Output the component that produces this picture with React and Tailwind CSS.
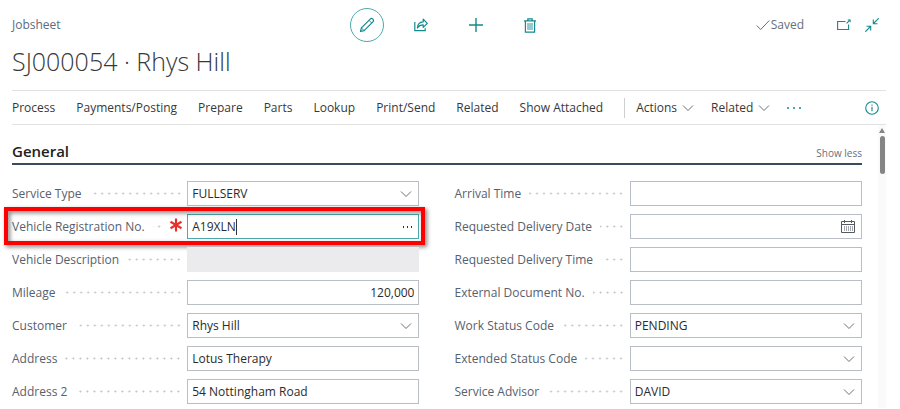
import React from "react";

const dots =
  "h-[3px] min-w-0 flex-1 bg-[radial-gradient(circle_at_center,#bcc0c6_0.8px,transparent_1.2px)] bg-[length:7px_3px] bg-right bg-repeat-x";
const frame = "flex h-[25px] w-full min-w-0 items-center border border-[#b8bdc6] bg-white";
const fieldText = "h-full min-w-0 bg-transparent px-1 text-[12px] text-[#2b2b2b] outline-none";

function Chevron({ className = "" }) {
  return (
    <svg className={className} width="12" height="8" viewBox="0 0 12 8" fill="none" stroke="#6b6f75" aria-hidden="true">
      <path d="M1 1.5 6 6.5 11 1.5" />
    </svg>
  );
}

function PencilIcon() {
  return (
    <svg width="16" height="16" viewBox="0 0 16 16" fill="none" stroke="currentColor" strokeWidth="1.2" strokeLinejoin="round" aria-hidden="true">
      <path d="M1.5 14.5 2.4 10.9 11.2 2.1Q12.5.8 13.9 2.1 15.2 3.5 13.9 4.8L5.1 13.6Z" />
      <path d="M2.4 10.9 5.1 13.6M10 3.3 12.7 6" strokeWidth="0.9" />
    </svg>
  );
}

function ShareIcon() {
  return (
    <svg width="14" height="14" viewBox="0 0 14 14" fill="none" stroke="currentColor" strokeWidth="1.2" aria-hidden="true">
      <path d="M.8 4V12.7H11.2V10.2" />
      <path d="M3.4 10Q3.6 4.2 9.2 3.8V1.2L13.3 5.4 9.2 9.4V6.8Q5.4 6.8 3.4 10Z" strokeLinejoin="round" />
    </svg>
  );
}

function PlusIcon() {
  return (
    <svg width="14" height="14" viewBox="0 0 14 14" fill="none" stroke="currentColor" strokeWidth="1.4" aria-hidden="true">
      <path d="M7 0V14M0 7H14" />
    </svg>
  );
}

function TrashIcon() {
  return (
    <svg width="12" height="15" viewBox="0 0 12 15" fill="none" stroke="currentColor" aria-hidden="true">
      <path d="M0 2.8H12M3.8 2.5V.8H8.2V2.5" strokeWidth="1.2" />
      <path d="M1.4 3V14.2H10.6V3" strokeWidth="1.2" />
      <path d="M4 5V12M6 5V12M8 5V12" strokeWidth="0.9" />
    </svg>
  );
}

function PopOutIcon() {
  return (
    <svg width="14" height="12" viewBox="0 0 14 12" fill="none" stroke="currentColor" strokeWidth="1.1" aria-hidden="true">
      <path d="M8.5 2.5H.6V10.5H11.6V5.5" />
      <path d="M9.6 4.4 12.8 1.2" />
      <path d="M10.4.4H13.6V3.6Z" fill="currentColor" stroke="none" />
    </svg>
  );
}

function CollapseIcon() {
  return (
    <svg width="14" height="14" viewBox="0 0 14 14" fill="none" stroke="currentColor" strokeWidth="1.1" aria-hidden="true">
      <path d="M13.7.3 8.5 5.5M8.3 1.5V5.7H12.5" />
      <path d="M.3 13.7 5.5 8.5M1.5 8.3H5.7V12.5" />
    </svg>
  );
}

function CalendarIcon() {
  return (
    <svg width="14" height="14" viewBox="0 0 14 14" fill="none" stroke="#555a60" aria-hidden="true">
      <path d="M.5 1.5H13.5V12.5H.5ZM.5 4.5H13.5M3.5 0V3M10.5 0V3" />
      <path d="M3.5 6V11M5.5 6V11M7.5 6V11M9.5 6V11M11.5 6V11" stroke="#a3a6ab" />
    </svg>
  );
}

function RequiredMark() {
  return (
    <svg className="mb-1 shrink-0" width="12" height="14" viewBox="0 0 12 14" fill="none" stroke="#e8302a" strokeWidth="2.2" role="img" aria-label="required">
      <path d="M6 .5V13.5M.5 3.8 11.5 10.2M11.5 3.8 .5 10.2" />
    </svg>
  );
}

function Control({ id, kind, value }) {
  if (kind === "select") {
    return (
      <div className={`${frame} relative`}>
        <select id={id} defaultValue={value} className={`${fieldText} w-full appearance-none`}>
          <option>{value}</option>
        </select>
        <Chevron className="pointer-events-none absolute right-[6px]" />
      </div>
    );
  }
  if (kind === "lookup") {
    return (
      <div className="flex h-[25px] w-full min-w-0 items-center border border-[#4fa9ad] bg-white">
        <input id={id} defaultValue={value} className="h-full min-w-0 field-sizing-content pl-1 text-[12px] text-[#2b2b2b] outline-none" />
        <span className="h-4 w-px bg-[#333]" />
        <button type="button" aria-label="Look up value" className="ml-auto flex items-center gap-[3px] px-[6px]">
          <span className="h-[2px] w-px bg-[#333]" />
          <span className="h-[2px] w-px bg-[#333]" />
          <span className="h-[2px] w-px bg-[#333]" />
        </button>
      </div>
    );
  }
  if (kind === "date") {
    return (
      <div className={frame}>
        <input id={id} type="text" defaultValue={value} className={`${fieldText} flex-1`} />
        <button type="button" aria-label="Pick a date" className="px-[6px]">
          <CalendarIcon />
        </button>
      </div>
    );
  }
  if (kind === "disabled") {
    return <input id={id} disabled className="h-[25px] w-full min-w-0 bg-[#ebebed]" />;
  }
  return (
    <div className={frame}>
      <input id={id} type="text" defaultValue={value} className={`${fieldText} w-full ${kind === "number" ? "text-right" : ""}`} />
    </div>
  );
}

function Field({ label, kind = "text", value = "", required = false }) {
  const id = label.toLowerCase().replace(/[^a-z0-9]+/g, "-");
  return (
    <div className="relative grid grid-cols-[43fr_57fr] items-center">
      <div className="flex min-w-0 items-center gap-2 pr-[5px]">
        <label htmlFor={id} className="whitespace-nowrap text-[#56616e]">
          {label}
        </label>
        <span className={dots} />
        {required && <RequiredMark />}
      </div>
      <Control id={id} kind={kind} value={value} />
      {required && (
        <div className="pointer-events-none absolute -top-[7px] -right-[5px] -bottom-[6px] -left-[8px] border-4 border-[#fe0000] drop-shadow-[2px_2px_2px_rgba(0,0,0,0.5)]" />
      )}
    </div>
  );
}

const leftFields = [
  { label: "Service Type", kind: "select", value: "FULLSERV" },
  { label: "Vehicle Registration No.", kind: "lookup", value: "A19XLN", required: true },
  { label: "Vehicle Description", kind: "disabled" },
  { label: "Mileage", kind: "number", value: "120,000" },
  { label: "Customer", kind: "select", value: "Rhys Hill" },
  { label: "Address", value: "Lotus Therapy" },
  { label: "Address 2", value: "54 Nottingham Road" },
];

const rightFields = [
  { label: "Arrival Time" },
  { label: "Requested Delivery Date", kind: "date" },
  { label: "Requested Delivery Time" },
  { label: "External Document No." },
  { label: "Work Status Code", kind: "select", value: "PENDING" },
  { label: "Extended Status Code", kind: "select" },
  { label: "Service Advisor", kind: "select", value: "DAVID" },
];

const menu = ["Process", "Payments/Posting", "Prepare", "Parts", "Lookup", "Print/Send", "Related", "Show Attached"];

export default function App() {
  return (
    <main className="bg-white pr-[14px] pl-3 font-['Open_Sans','Noto_Sans',sans-serif] text-[12px] leading-5 text-[#383838]">
      <header>
        <div className="flex items-center pt-2">
          <span className="flex-1 text-[#5d6b80]">Jobsheet</span>
          <div className="flex items-center pr-[5px] text-[#14898e]">
            <button type="button" aria-label="Edit" className="flex size-[34px] items-center justify-center rounded-full border border-[#4fa9ad]">
              <PencilIcon />
            </button>
            <button type="button" aria-label="Share" className="ml-[30px]">
              <ShareIcon />
            </button>
            <button type="button" aria-label="New" className="ml-[41px]">
              <PlusIcon />
            </button>
            <button type="button" aria-label="Delete" className="ml-[41px]">
              <TrashIcon />
            </button>
          </div>
          <div className="flex flex-1 items-center justify-end pr-[7px] text-[#14898e]">
            <span className="flex items-center gap-px text-[#66707f]">
              <svg width="14" height="12" viewBox="0 0 14 12" fill="none" stroke="currentColor" aria-hidden="true">
                <path d="M.7 6.5 4.7 10.5 13.3 1.5" />
              </svg>
              Saved
            </span>
            <button type="button" aria-label="Open in new window" className="ml-[33px]">
              <PopOutIcon />
            </button>
            <button type="button" aria-label="Collapse" className="ml-[14px]">
              <CollapseIcon />
            </button>
          </div>
        </div>
        <h1 className="mt-[3px] text-[25px] leading-8 font-light">SJ000054 · Rhys Hill</h1>
      </header>

      <nav className="mt-[13px] flex h-[35px] items-center border-y border-[#e2e2e2]">
        <div className="flex items-center gap-[21px]">
          {menu.map((item) => (
            <button key={item} type="button" className="whitespace-nowrap">
              {item}
            </button>
          ))}
        </div>
        <div className="ml-[21px] flex items-center gap-[17px] border-l border-[#cfcfd3] pl-[11px]">
          <button type="button" className="flex items-center gap-[5px]">
            Actions <Chevron />
          </button>
          <button type="button" className="flex items-center gap-[5px]">
            Related <Chevron />
          </button>
          <button type="button" aria-label="More options" className="flex gap-[4px]">
            <span className="size-[2px] rounded-full bg-[#14898e]" />
            <span className="size-[2px] rounded-full bg-[#14898e]" />
            <span className="size-[2px] rounded-full bg-[#14898e]" />
          </button>
        </div>
        <button type="button" aria-label="Details" className="mr-[7px] ml-auto text-[#14898e]">
          <svg width="14" height="14" viewBox="0 0 14 14" fill="none" stroke="currentColor" strokeWidth="1.1" aria-hidden="true">
            <circle cx="7" cy="7" r="6.3" />
            <path d="M7 5.8V10.2M7 3.6V4.8" />
          </svg>
        </button>
      </nav>

      <div className="flex">
        <section className="min-w-0 flex-1 pr-4 pb-1">
          <div className="flex h-[40px] items-end justify-between border-b-2 border-[#3b4a61]">
            <h2 className="text-[15px] leading-6 font-semibold text-[#212121]">General</h2>
            <button type="button" className="text-[10px] text-[#68707d]">
              Show less
            </button>
          </div>
          <div className="mt-4 grid grid-cols-2 gap-x-[35px]">
            <div className="flex flex-col gap-2">
              {leftFields.map((field) => (
                <Field key={field.label} {...field} />
              ))}
            </div>
            <div className="flex flex-col gap-2">
              {rightFields.map((field) => (
                <Field key={field.label} {...field} />
              ))}
            </div>
          </div>
        </section>
        <div className="flex w-2 flex-col items-center bg-[#fafafa]" aria-hidden="true">
          <svg className="mt-[3px]" width="6" height="5" viewBox="0 0 6 5">
            <path d="M3 0 6 5H0Z" fill="#858585" />
          </svg>
          <div className="mt-[3px] h-[38px] w-[5px] rounded-full bg-[#858585]" />
        </div>
      </div>
    </main>
  );
}
